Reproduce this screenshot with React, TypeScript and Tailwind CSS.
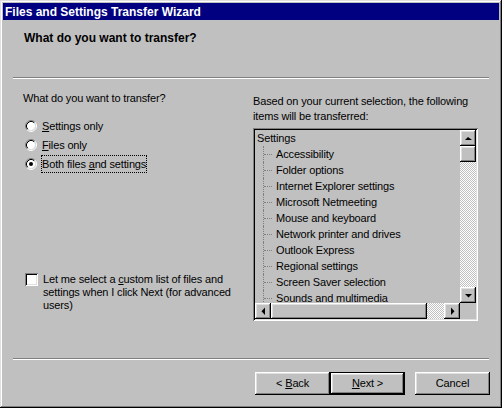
import React from "react";

const raised =
  "shadow-[inset_-1px_-1px_#000,inset_1px_1px_#fff,inset_-2px_-2px_#808080,inset_2px_2px_#dfdfdf]";
const sunken =
  "shadow-[inset_1px_1px_#808080,inset_-1px_-1px_#fff,inset_2px_2px_#000,inset_-2px_-2px_#dfdfdf]";
const dither =
  "bg-[image:repeating-conic-gradient(#fff_0_25%,#c0c0c0_0_50%)] bg-[length:2px_2px]";

const items = [
  "Accessibility",
  "Folder options",
  "Internet Explorer settings",
  "Microsoft Netmeeting",
  "Mouse and keyboard",
  "Network printer and drives",
  "Outlook Express",
  "Regional settings",
  "Screen Saver selection",
  "Sounds and multimedia",
];

const Radio: React.FC<{ checked?: boolean }> = ({ checked }) => (
  <svg width="12" height="12" viewBox="0 0 12 12" className="shrink-0">
    <circle cx="6" cy="6" r="4.2" fill="#fff" />
    <path d="M2.11 9.89 A5.5 5.5 0 0 1 9.89 2.11" fill="none" stroke="#808080" />
    <path d="M9.89 2.11 A5.5 5.5 0 0 1 2.11 9.89" fill="none" stroke="#fff" />
    <path d="M2.82 9.18 A4.5 4.5 0 0 1 9.18 2.82" fill="none" stroke="#000" />
    <path d="M9.18 2.82 A4.5 4.5 0 0 1 2.82 9.18" fill="none" stroke="#dfdfdf" />
    {checked && <circle cx="6" cy="6" r="2" fill="#000" />}
  </svg>
);

const Arrow: React.FC<{ dir: "up" | "down" | "left" | "right" }> = ({ dir }) => {
  const pts = {
    up: "4,1 1,4 8,4",
    down: "1,1 8,1 4.5,4.5",
    left: "4,0.5 4,8 0.5,4.2",
    right: "1,0.5 1,8 4.5,4.2",
  }[dir];
  const vertical = dir === "up" || dir === "down";
  return (
    <svg
      width={vertical ? 9 : 5}
      height={vertical ? 5 : 9}
      viewBox={vertical ? "0 0 9 5" : "0 0 5 9"}
    >
      <polygon points={pts} fill="#000" />
    </svg>
  );
};

const SbButton: React.FC<{ dir: "up" | "down" | "left" | "right" }> = ({ dir }) => (
  <div className={`w-[16px] h-[16px] shrink-0 bg-[#c0c0c0] flex items-center justify-center ${raised}`}>
    <Arrow dir={dir} />
  </div>
);

const Button: React.FC<{ children: React.ReactNode; def?: boolean }> = ({ children, def }) => (
  <div
    className={`w-[75px] h-[23px] flex items-center justify-center bg-[#c0c0c0] ${raised} ${
      def ? "border border-black" : ""
    }`}
  >
    {children}
  </div>
);

export default function App() {
  return (
    <div
      className={`w-[502px] h-[408px] bg-[#c0c0c0] p-[3px] flex flex-col text-black text-[11px] tracking-[-0.15px] font-['Liberation_Sans',Arial,sans-serif] shadow-[inset_-1px_-1px_#000,inset_1px_1px_#dfdfdf,inset_-2px_-2px_#808080,inset_2px_2px_#fff]`}
    >
      <div className="h-[17px] bg-[#000080] flex items-center pl-[2px] text-white font-bold text-[12px] tracking-normal leading-none">
        Files and Settings Transfer Wizard
      </div>

      <div className="h-[57px] pl-[21px] pt-[10px] font-bold text-[12px] tracking-normal leading-[16px]">
        What do you want to transfer?
      </div>

      <div className="mx-[10px] h-[2px] border-t border-[#808080] border-b border-b-white" />

      <div className="h-[279px] flex pl-[20px]">
        <div className="w-[230px] pt-[13px]">
          <div className="leading-[13px]">What do you want to transfer?</div>
          <div className="mt-[11px] flex flex-col">
            <div className="h-[19px] flex items-center pl-[2px] gap-[4px]">
              <Radio />
              <span className="h-[18px] leading-[16px] border border-transparent">
                <span className="underline">S</span>ettings only
              </span>
            </div>
            <div className="h-[19px] flex items-center pl-[2px] gap-[4px]">
              <Radio />
              <span className="h-[18px] leading-[16px] border border-transparent">
                <span className="underline">F</span>iles only
              </span>
            </div>
            <div className="h-[19px] flex items-center pl-[2px] gap-[4px]">
              <Radio checked />
              <span className="h-[18px] leading-[16px] border border-dotted border-black">
                Both files <span className="underline">a</span>nd settings
              </span>
            </div>
          </div>
          <div className="mt-[100px] flex pl-[2px] gap-[4px]">
            <div className={`w-[13px] h-[13px] shrink-0 bg-white ${sunken}`} />
            <div className="leading-[13px] pl-[1px] whitespace-nowrap">
              Let me select a <span className="underline">c</span>ustom list of files and
              <br />
              settings when I click Next (for advanced
              <br />
              users)
            </div>
          </div>
        </div>

        <div className="w-[225px] pt-[15px]">
          <div className="leading-[15px] whitespace-nowrap">
            Based on your current selection, the following
            <br />
            items will be transferred:
          </div>
          <div className={`mt-[4px] h-[193px] p-[2px] flex flex-col ${sunken}`}>
            <div className="flex flex-1 min-h-0">
              <div className="flex-1 overflow-hidden">
                <div className="h-[16px] leading-[16px] pl-[2px]">Settings</div>
                {items.map((it) => (
                  <div key={it} className="h-[16px] flex items-center whitespace-nowrap">
                    <span className="relative ml-[8px] mr-[3px] w-[10px] h-full border-l border-dotted border-[#808080]">
                      <span className="absolute left-0 top-[8px] w-[8px] border-t border-dotted border-[#808080]" />
                    </span>
                    <span className="leading-[16px]">{it}</span>
                  </div>
                ))}
              </div>
              <div className="w-[16px] flex flex-col">
                <SbButton dir="up" />
                <div className={`w-[16px] h-[16px] bg-[#c0c0c0] ${raised}`} />
                <div className={`flex-1 ${dither}`} />
                <SbButton dir="down" />
              </div>
            </div>
            <div className="h-[16px] flex">
              <SbButton dir="left" />
              <div className={`w-[156px] h-[16px] bg-[#c0c0c0] ${raised}`} />
              <div className={`flex-1 ${dither}`} />
              <SbButton dir="right" />
              <div className="w-[16px] h-[16px] bg-[#c0c0c0]" />
            </div>
          </div>
        </div>
      </div>

      <div className="mx-[10px] h-[2px] border-t border-[#808080] border-b border-b-white" />

      <div className="pt-[12px] pr-[9px] flex justify-end">
        <Button>
          &lt; <span className="underline ml-[3px]">B</span>ack
        </Button>
        <Button def>
          <span className="underline">N</span>ext &gt;
        </Button>
        <div className="w-[10px]" />
        <Button>Cancel</Button>
      </div>
    </div>
  );
}
